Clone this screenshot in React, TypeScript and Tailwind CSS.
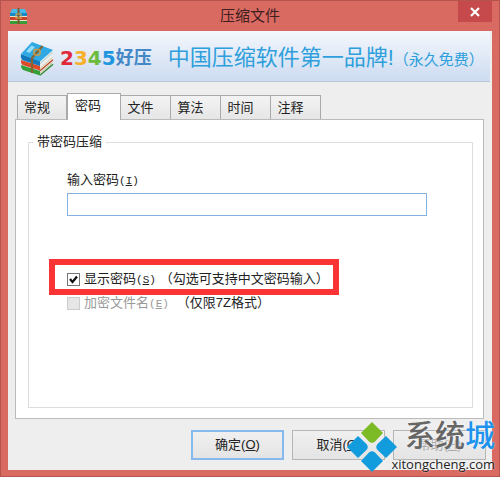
import { useState } from "react";
import type { ReactNode } from "react";

const TABS = ["常规", "密码", "文件", "算法", "时间", "注释"];

function BooksIcon({ className }: { className: string }) {
  return (
    <svg viewBox="0 0 34 35" className={className} aria-hidden="true">
      <path d="M1 24 20 30V34.500L3 29Q0.500 27 1 24Z" fill="#35a03a" />
      <path d="M20 30 33 19V23.500L20 34.500Z" fill="#e6ecd8" />
      <path d="M20 34.300 33 23.300" stroke="#2f8a33" strokeWidth="1.400" />
      <path d="M1 19 20 25V29.500L2.500 24Q0.500 22 1 19Z" fill="#dc4a28" />
      <path d="M20 25 33 14V18.500L20 29.500Z" fill="#f7efdf" />
      <path d="M20 29.700 33 18.700" stroke="#b5452d" strokeWidth="1.200" />
      <path d="M1 13 20 20V25L2 19Q0 16 1 13Z" fill="#1478bd" />
      <path d="M20 20 33 9V13.500L20 25Z" fill="#e3eef2" />
      <path d="M20 22.500 32.500 11.500M20 27.300 32.500 16.500M20 32.200 32.500 21.500" stroke="#a9a896" strokeWidth="0.600" />
      <path d="M1 13 12 1 33 9 20 20.500Z" fill="#30a8e3" />
      <path d="M6 10.500 11.500 4.500 15 6 9.500 12Z" fill="#94dcf7" />
      <path d="M22.500 5 12 17V32" fill="none" stroke="#846430" strokeWidth="2.200" />
      <rect x="14" y="8.500" width="6" height="5.500" rx="1.500" fill="none" stroke="#c79d4a" strokeWidth="1.600" />
    </svg>
  );
}

function SmallBooksIcon() {
  return (
    <svg viewBox="0 0 17 17" className="h-[17px] w-[17px]" aria-hidden="true">
      <path d="M2 1H15L17 6H0Z" fill="#45b9e8" />
      <rect y="5" width="17" height="3" fill="#1788c5" />
      <rect y="8" width="17" height="1" fill="#e9e0c8" />
      <rect y="9" width="17" height="3" fill="#c8452a" />
      <rect y="12" width="17" height="1" fill="#ece5cd" />
      <rect y="13" width="17" height="3" fill="#3a9c38" />
      <path d="M8.500 0V16" stroke="#7b5a2b" strokeWidth="2" />
      <rect x="6" y="6" width="5" height="4" fill="none" stroke="#d7b25b" />
    </svg>
  );
}

function Key({ letter }: { letter: string }) {
  return (
    <span className="font-['Liberation_Mono',monospace] text-[11px]">
      (<u>{letter}</u>)
    </span>
  );
}

function CheckRow(props: {
  id: string;
  label: string;
  letter: string;
  note: string;
  checked: boolean;
  disabled?: boolean;
  onChange?: () => void;
}) {
  return (
    <div className="flex h-6 items-center whitespace-nowrap">
      <span className="relative mr-1 h-[13px] w-[13px]">
        <input
          id={props.id}
          type="checkbox"
          checked={props.checked}
          disabled={props.disabled}
          onChange={props.onChange}
          className="block h-[13px] w-[13px] appearance-none border border-[#777] bg-white disabled:border-[#ccc] disabled:bg-[#e6e6e6]"
        />
        {props.checked && (
          <svg viewBox="0 0 13 13" className="pointer-events-none absolute inset-0" aria-hidden="true">
            <path d="M3 6 5.500 9 10 3.500" fill="none" stroke="#111" strokeWidth="2.200" />
          </svg>
        )}
      </span>
      <label htmlFor={props.id} className={props.disabled ? "text-[#999]" : ""}>
        {props.label}
        <Key letter={props.letter} />
      </label>
      <span className={props.disabled ? "ml-2" : "ml-1"}>{props.note}</span>
    </div>
  );
}

function DialogButton({ primary, children }: { primary?: boolean; children: ReactNode }) {
  return (
    <button
      type="button"
      className={
        "h-[30px] w-[93px] bg-linear-to-b from-[#f0f0f0] to-[#e4e4e4] " +
        (primary ? "border-2 border-[#86b9ee]" : "border border-[#b5b5b5]")
      }
    >
      {children}
    </button>
  );
}

function SiteMark() {
  return (
    <div className="pointer-events-none absolute right-1 bottom-0 flex h-[58px] items-start">
      <svg viewBox="0 0 50 50" className="-mr-1.5 mt-1 h-[50px] w-[50px]" aria-hidden="true">
        <path d="M25 0 36 11 28 19.500Q25 22 22 19.500L14 11Z" fill="#7cba26" />
        <path d="M11 14 19.500 22Q22 25 19.500 28L11 36 0 25Z" fill="#129bdd" />
        <path d="M39 14 50 25 39 36 30.500 28Q28 25 30.500 22Z" fill="#129bdd" />
        <path d="M25 50 14 39 22 30.500Q25 28 28 30.500L36 39Z" fill="#129bdd" />
      </svg>
      <div className="flex flex-col items-end whitespace-nowrap">
        <div className="flex h-9 items-center text-[30px] font-medium text-[#666] [text-shadow:0_0_2px_#fff]">
          系统<span className="text-[#1e93ee]">城</span>
        </div>
        <div className="h-5 font-['Open_Sans',sans-serif] text-[13px] text-[#222] [text-shadow:0_0_2px_#fff]">
          xitongcheng.com
        </div>
      </div>
    </div>
  );
}

export default function App() {
  const [tab, setTab] = useState("密码");
  const [password, setPassword] = useState("");
  const [shown, setShown] = useState(true);

  return (
    <div className="relative flex min-h-screen flex-col border border-[#b4544e] bg-[#d96a62] px-[7px] pb-1.5 font-['Liberation_Sans','Noto_Sans_CJK_SC',sans-serif] text-[13px] leading-5 text-[#222]">
      <header className="relative flex h-[30px] items-center justify-center">
        <span className="absolute left-0.5">
          <SmallBooksIcon />
        </span>
        <h1 className="text-[15px] text-[#40201e]">压缩文件</h1>
        <button
          type="button"
          aria-label="关闭"
          className="absolute top-0 right-0 flex h-[21px] w-[34px] items-center justify-center bg-[#c64a4c]"
        >
          <svg viewBox="0 0 10 10" className="h-2.5 w-2.5" aria-hidden="true">
            <path d="M1 1 9 9M9 1 1 9" stroke="#fff" strokeWidth="2.200" />
          </svg>
        </button>
      </header>

      <main className="flex flex-1 flex-col bg-[#eee]">
        <div className="mr-0.5 flex h-[51px] items-center border-b border-[#b9c6d8] bg-linear-to-b from-[#f4f7fd] to-[#cddcf0] pl-3 whitespace-nowrap">
          <BooksIcon className="mt-1 h-[35px] w-[34px]" />
          <div className="mt-1 ml-1.5 flex items-center">
            <span className="font-['DejaVu_Sans',sans-serif] text-xl font-bold">
              <span className="text-[#e02a3c]">2</span>
              <span className="text-[#f6b02c]">3</span>
              <span className="text-[#6dbb3c]">4</span>
              <span className="text-[#1e97e0]">5</span>
            </span>
            <span className="text-lg font-bold text-[#4487c6]">好压</span>
          </div>
          <p className="mt-1 ml-4 text-[22px] text-[#2e9fdc]">中国压缩软件第一品牌!</p>
          <p className="mt-2 text-[15px] text-[#2e9fdc]">（永久免费）</p>
        </div>

        <div role="tablist" className="mt-2.5 ml-[9px] flex h-[27px] items-end">
          {TABS.map((name) => (
            <button
              key={name}
              type="button"
              role="tab"
              aria-selected={tab === name}
              onClick={() => setTab(name)}
              className={
                tab === name
                  ? "relative -mb-px h-[27px] w-[54px] border border-b-0 border-[#aaa] bg-white pr-3 pb-0.5"
                  : "h-6 w-[50px] border border-b-0 border-l-0 border-[#aaa] bg-linear-to-b from-[#f3f3f3] to-[#e6e6e6] pr-2.5 first:border-l"
              }
            >
              {name}
            </button>
          ))}
        </div>

        <section className="mr-2 ml-[7px] flex flex-1 flex-col border border-[#bbb] bg-white pt-3 pr-2.5 pb-2.5 pl-3">
          <fieldset className="flex-1 border border-[#ddd] pr-[45px] pl-[38px]">
            <legend className="-ml-[34px] px-1 leading-5">带密码压缩</legend>
            <label htmlFor="password" className="mt-[18px] block">
              输入密码
              <Key letter="I" />
            </label>
            <input
              id="password"
              type="text"
              value={password}
              onChange={(e) => setPassword(e.target.value)}
              className="mt-0.5 block h-[23px] w-full border border-[#86b2e0] bg-white px-1 outline-none"
            />
            <div className="relative mt-[51px] w-fit">
              <CheckRow
                id="show"
                label="显示密码"
                letter="S"
                note="（勾选可支持中文密码输入）"
                checked={shown}
                onChange={() => setShown(!shown)}
              />
              <div className="pointer-events-none absolute -top-2 -right-2.5 -bottom-1 -left-[18px] border-6 border-[#fa3335]" />
            </div>
            <CheckRow id="names" label="加密文件名" letter="E" note="（仅限7Z格式）" checked={false} disabled />
          </fieldset>
        </section>

        <div className="mt-[11px] mr-1.5 mb-2.5 flex justify-end gap-2">
          <DialogButton primary>
            确定(<u>O</u>)
          </DialogButton>
          <DialogButton>
            取消(<u>C</u>)
          </DialogButton>
          <DialogButton>
            <span className="text-[#aaa]">
              帮助(<u>H</u>)
            </span>
          </DialogButton>
        </div>
      </main>
      <SiteMark />
    </div>
  );
}
